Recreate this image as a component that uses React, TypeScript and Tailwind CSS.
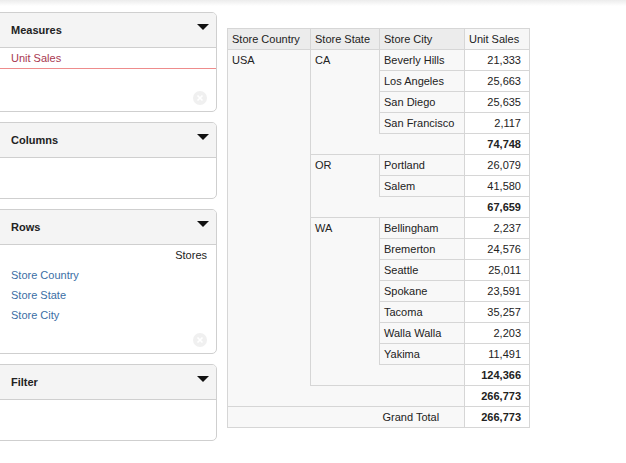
import React from "react";

const Tri = () => (
  <svg width="12" height="6" viewBox="0 0 12 6" className="absolute right-[7px] top-[11px]">
    <polygon points="0,0 12,0 6,6" fill="#111" />
  </svg>
);

const CloseDot = () => (
  <svg width="14" height="14" viewBox="0 0 14 14" className="absolute right-[9px] bottom-[6px]">
    <circle cx="7" cy="7" r="7" fill="#f0f0f0" />
    <path d="M4.5 4.5 L9.5 9.5 M9.5 4.5 L4.5 9.5" stroke="#fff" strokeWidth="1.6" />
  </svg>
);

function Panel({ title, bodyH, children }: { title: string; bodyH: string; children?: React.ReactNode }) {
  return (
    <div className="border border-[#cfcfcf] rounded-[5px] bg-white overflow-hidden">
      <div className="relative h-[35px] bg-[#f4f4f4] border-b border-[#cfcfcf] flex items-center pl-[15px] font-bold text-[11px] text-[#222]">
        {title}
        <Tri />
      </div>
      <div className={`relative ${bodyH}`}>{children}</div>
    </div>
  );
}

const B = "border-[#d6d6d6]";

export default function App() {
  const td = "h-[21px] p-0 text-[11px] leading-[20px] align-middle";
  const hd = `${td} bg-[#f8f8f8] pl-[4px] text-left align-top border-t border-l ${B}`;
  const cityCell = `${td} bg-[#f8f8f8] pl-[4px] text-left border-t border-l ${B}`;
  const valCell = `${td} bg-white pr-[8px] text-right border-t border-l border-r ${B}`;
  const totCell = `${td} bg-white pr-[8px] text-right font-bold border-t border-l border-r ${B}`;
  const emptyTot = `${td} bg-[#f8f8f8] border-t border-l-0 ${B}`;

  const states: { st: string; cities: [string, string][]; total: string }[] = [
    { st: "CA", cities: [["Beverly Hills", "21,333"], ["Los Angeles", "25,663"], ["San Diego", "25,635"], ["San Francisco", "2,117"]], total: "74,748" },
    { st: "OR", cities: [["Portland", "26,079"], ["Salem", "41,580"]], total: "67,659" },
    { st: "WA", cities: [["Bellingham", "2,237"], ["Bremerton", "24,576"], ["Seattle", "25,011"], ["Spokane", "23,591"], ["Tacoma", "35,257"], ["Walla Walla", "2,203"], ["Yakima", "11,491"]], total: "124,366" },
  ];
  const totalRows = states.reduce((a, s) => a + s.cities.length + 1, 0) + 1;

  const rows: React.ReactNode[] = [];
  states.forEach((s, si) => {
    s.cities.forEach(([c, v], ci) => {
      rows.push(
        <tr key={s.st + c}>
          {si === 0 && ci === 0 && (
            <td rowSpan={totalRows} className={`${hd} border-r-0`}>USA</td>
          )}
          {ci === 0 && (
            <td rowSpan={s.cities.length + 1} className={`${hd} border-r-0`}>{s.st}</td>
          )}
          <td className={cityCell}>{c}</td>
          <td className={valCell}>{v}</td>
        </tr>
      );
    });
    rows.push(
      <tr key={s.st + "tot"}>
        <td className={emptyTot}></td>
        <td className={totCell}>{s.total}</td>
      </tr>
    );
  });
  rows.push(
    <tr key="usatot">
      <td colSpan={2} className={emptyTot}></td>
      <td className={totCell}>266,773</td>
    </tr>
  );

  return (
    <div className="w-[626px] h-[463px] bg-white overflow-hidden" style={{ fontFamily: '"Liberation Sans", Arial, sans-serif' }}>
      <div className="h-[6px] bg-gradient-to-b from-[#ececec] to-white" />
      <div className="flex items-start">
        <div className="-ml-[5px] w-[222px] mt-[6px] flex flex-col gap-[10px]">
          <Panel title="Measures" bodyH="h-[63px]">
            <div className="h-[21px] leading-[20px] pl-[15px] text-[11px] text-[#a8384f] border-b border-[#ee8c8c]">Unit Sales</div>
            <CloseDot />
          </Panel>
          <Panel title="Columns" bodyH="h-[40px]" />
          <Panel title="Rows" bodyH="h-[108px]">
            <div className="text-[11px] leading-[20px]">
              <div className="text-right pr-[9px] text-[#222]">Stores</div>
              <div className="pl-[15px] text-[#3a6ea5]">Store Country</div>
              <div className="pl-[15px] text-[#3a6ea5]">Store State</div>
              <div className="pl-[15px] text-[#3a6ea5]">Store City</div>
            </div>
            <CloseDot />
          </Panel>
          <Panel title="Filter" bodyH="h-[40px]" />
        </div>
        <div className="ml-[10px] mt-[22px]">
          <table className={`table-fixed border-collapse border ${B} text-[#222] w-[302px]`}>
            <colgroup>
              <col className="w-[83px]" />
              <col className="w-[69px]" />
              <col className="w-[85px]" />
              <col className="w-[65px]" />
            </colgroup>
            <thead>
              <tr>
                <th className={`${td} font-normal text-left pl-[4px] bg-[#ececec] border ${B}`}>Store Country</th>
                <th className={`${td} font-normal text-left pl-[4px] bg-[#ececec] border ${B}`}>Store State</th>
                <th className={`${td} font-normal text-left pl-[4px] bg-[#ececec] border ${B}`}>Store City</th>
                <th className={`${td} font-normal text-left pl-[4px] bg-[#f6f6f6] border ${B}`}>Unit Sales</th>
              </tr>
            </thead>
            <tbody>
              {rows}
              <tr>
                <td colSpan={2} className={`${td} bg-[#f8f8f8] border-t ${B}`}></td>
                <td className={`${td} bg-[#f8f8f8] pl-[3px] border-t ${B}`}>Grand Total</td>
                <td className={totCell}>266,773</td>
              </tr>
            </tbody>
          </table>
        </div>
      </div>
    </div>
  );
}
